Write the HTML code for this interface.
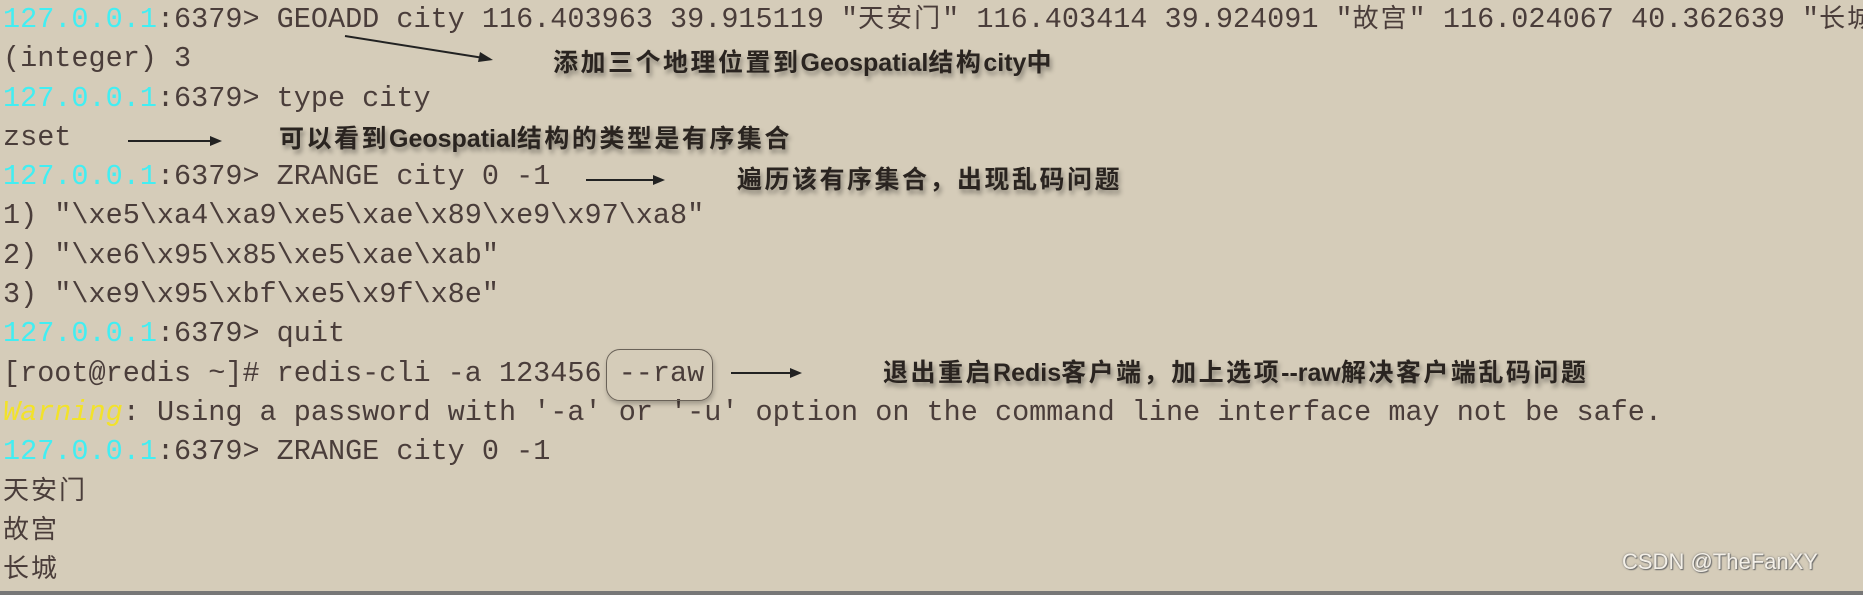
<!DOCTYPE html>
<html><head><meta charset="utf-8"><style>
html,body{margin:0;padding:0}
body{width:1863px;height:595px;background:#d5ccb9;position:relative;overflow:hidden}
.t{position:absolute;left:3px;top:0;font-family:"Liberation Mono","Noto Sans CJK SC",monospace;font-size:28.5px;color:#4a3d3a;line-height:39.3px;width:1900px}
.t div{height:39.3px;white-space:pre}
.c{color:#42eef2}
.w{color:#f2e22a;font-style:italic}
.z{font-family:"Noto Sans CJK SC",sans-serif;font-size:26px;letter-spacing:2px;line-height:30px}
.a{position:absolute;font-family:"Liberation Sans","Noto Sans CJK SC",sans-serif;font-weight:bold;font-size:25px;color:#2a2420;letter-spacing:2.5px;text-shadow:2px 4px 5px rgba(0,0,0,.35);white-space:nowrap;line-height:30px}
.a b{letter-spacing:0}
.box{position:absolute;left:606px;top:349px;width:105px;height:50px;border:1.5px solid #6a6258;border-radius:14px;box-shadow:1px 3px 5px rgba(0,0,0,.25)}
.bot{position:absolute;left:0;top:591px;width:1863px;height:4px;background:#777}
.wm{position:absolute;left:1622px;top:549px;font-family:"Liberation Sans",sans-serif;font-size:22px;color:#f4f0e8;text-shadow:0 0 2px #777,1px 1px 1px #666}
svg{position:absolute;left:0;top:0}
</style></head><body>
<div class="t"><div><span class="c">127.0.0.1</span>:6379&gt; GEOADD city 116.403963 39.915119 "<span class="z">天安门</span>" 116.403414 39.924091 "<span class="z">故宫</span>" 116.024067 40.362639 "<span class="z">长城</span>"</div><div>(integer) 3</div><div><span class="c">127.0.0.1</span>:6379&gt; type city</div><div>zset</div><div><span class="c">127.0.0.1</span>:6379&gt; ZRANGE city 0 -1</div><div>1) "\xe5\xa4\xa9\xe5\xae\x89\xe9\x97\xa8"</div><div>2) "\xe6\x95\x85\xe5\xae\xab"</div><div>3) "\xe9\x95\xbf\xe5\x9f\x8e"</div><div><span class="c">127.0.0.1</span>:6379&gt; quit</div><div>[root@redis ~]# redis-cli -a 123456 --raw</div><div><span class="w">Warning</span>: Using a password with '-a' or '-u' option on the command line interface may not be safe.</div><div><span class="c">127.0.0.1</span>:6379&gt; ZRANGE city 0 -1</div><div><span class="z">天安门</span></div><div><span class="z">故宫</span></div><div><span class="z">长城</span></div></div>
<div class="box"></div>
<svg width="1863" height="595">
<g stroke="#222" stroke-width="2" fill="none">
<line x1="345" y1="36" x2="490" y2="59"/>
<line x1="128" y1="141" x2="219" y2="141"/>
<line x1="586" y1="180" x2="662" y2="180"/>
<line x1="731" y1="373" x2="799" y2="373"/>
</g>
<g fill="#222">
<polygon points="493,60 480,52 478,62"/>
<polygon points="222,141 210,136 210,146"/>
<polygon points="665,180 653,175 653,185"/>
<polygon points="802,373 790,368 790,378"/>
</g>
</svg>
<div class="a" style="left:553px;top:48px">添加三个地理位置到<b>Geospatial</b>结构<b>city</b>中</div>
<div class="a" style="left:279px;top:124px">可以看到<b>Geospatial</b>结构的类型是有序集合</div>
<div class="a" style="left:737px;top:165px">遍历该有序集合，出现乱码问题</div>
<div class="a" style="left:883px;top:358px">退出重启<b>Redis</b>客户端，加上选项<b>--raw</b>解决客户端乱码问题</div>
<div class="wm">CSDN @TheFanXY</div>
<div class="bot"></div>
</body></html>
